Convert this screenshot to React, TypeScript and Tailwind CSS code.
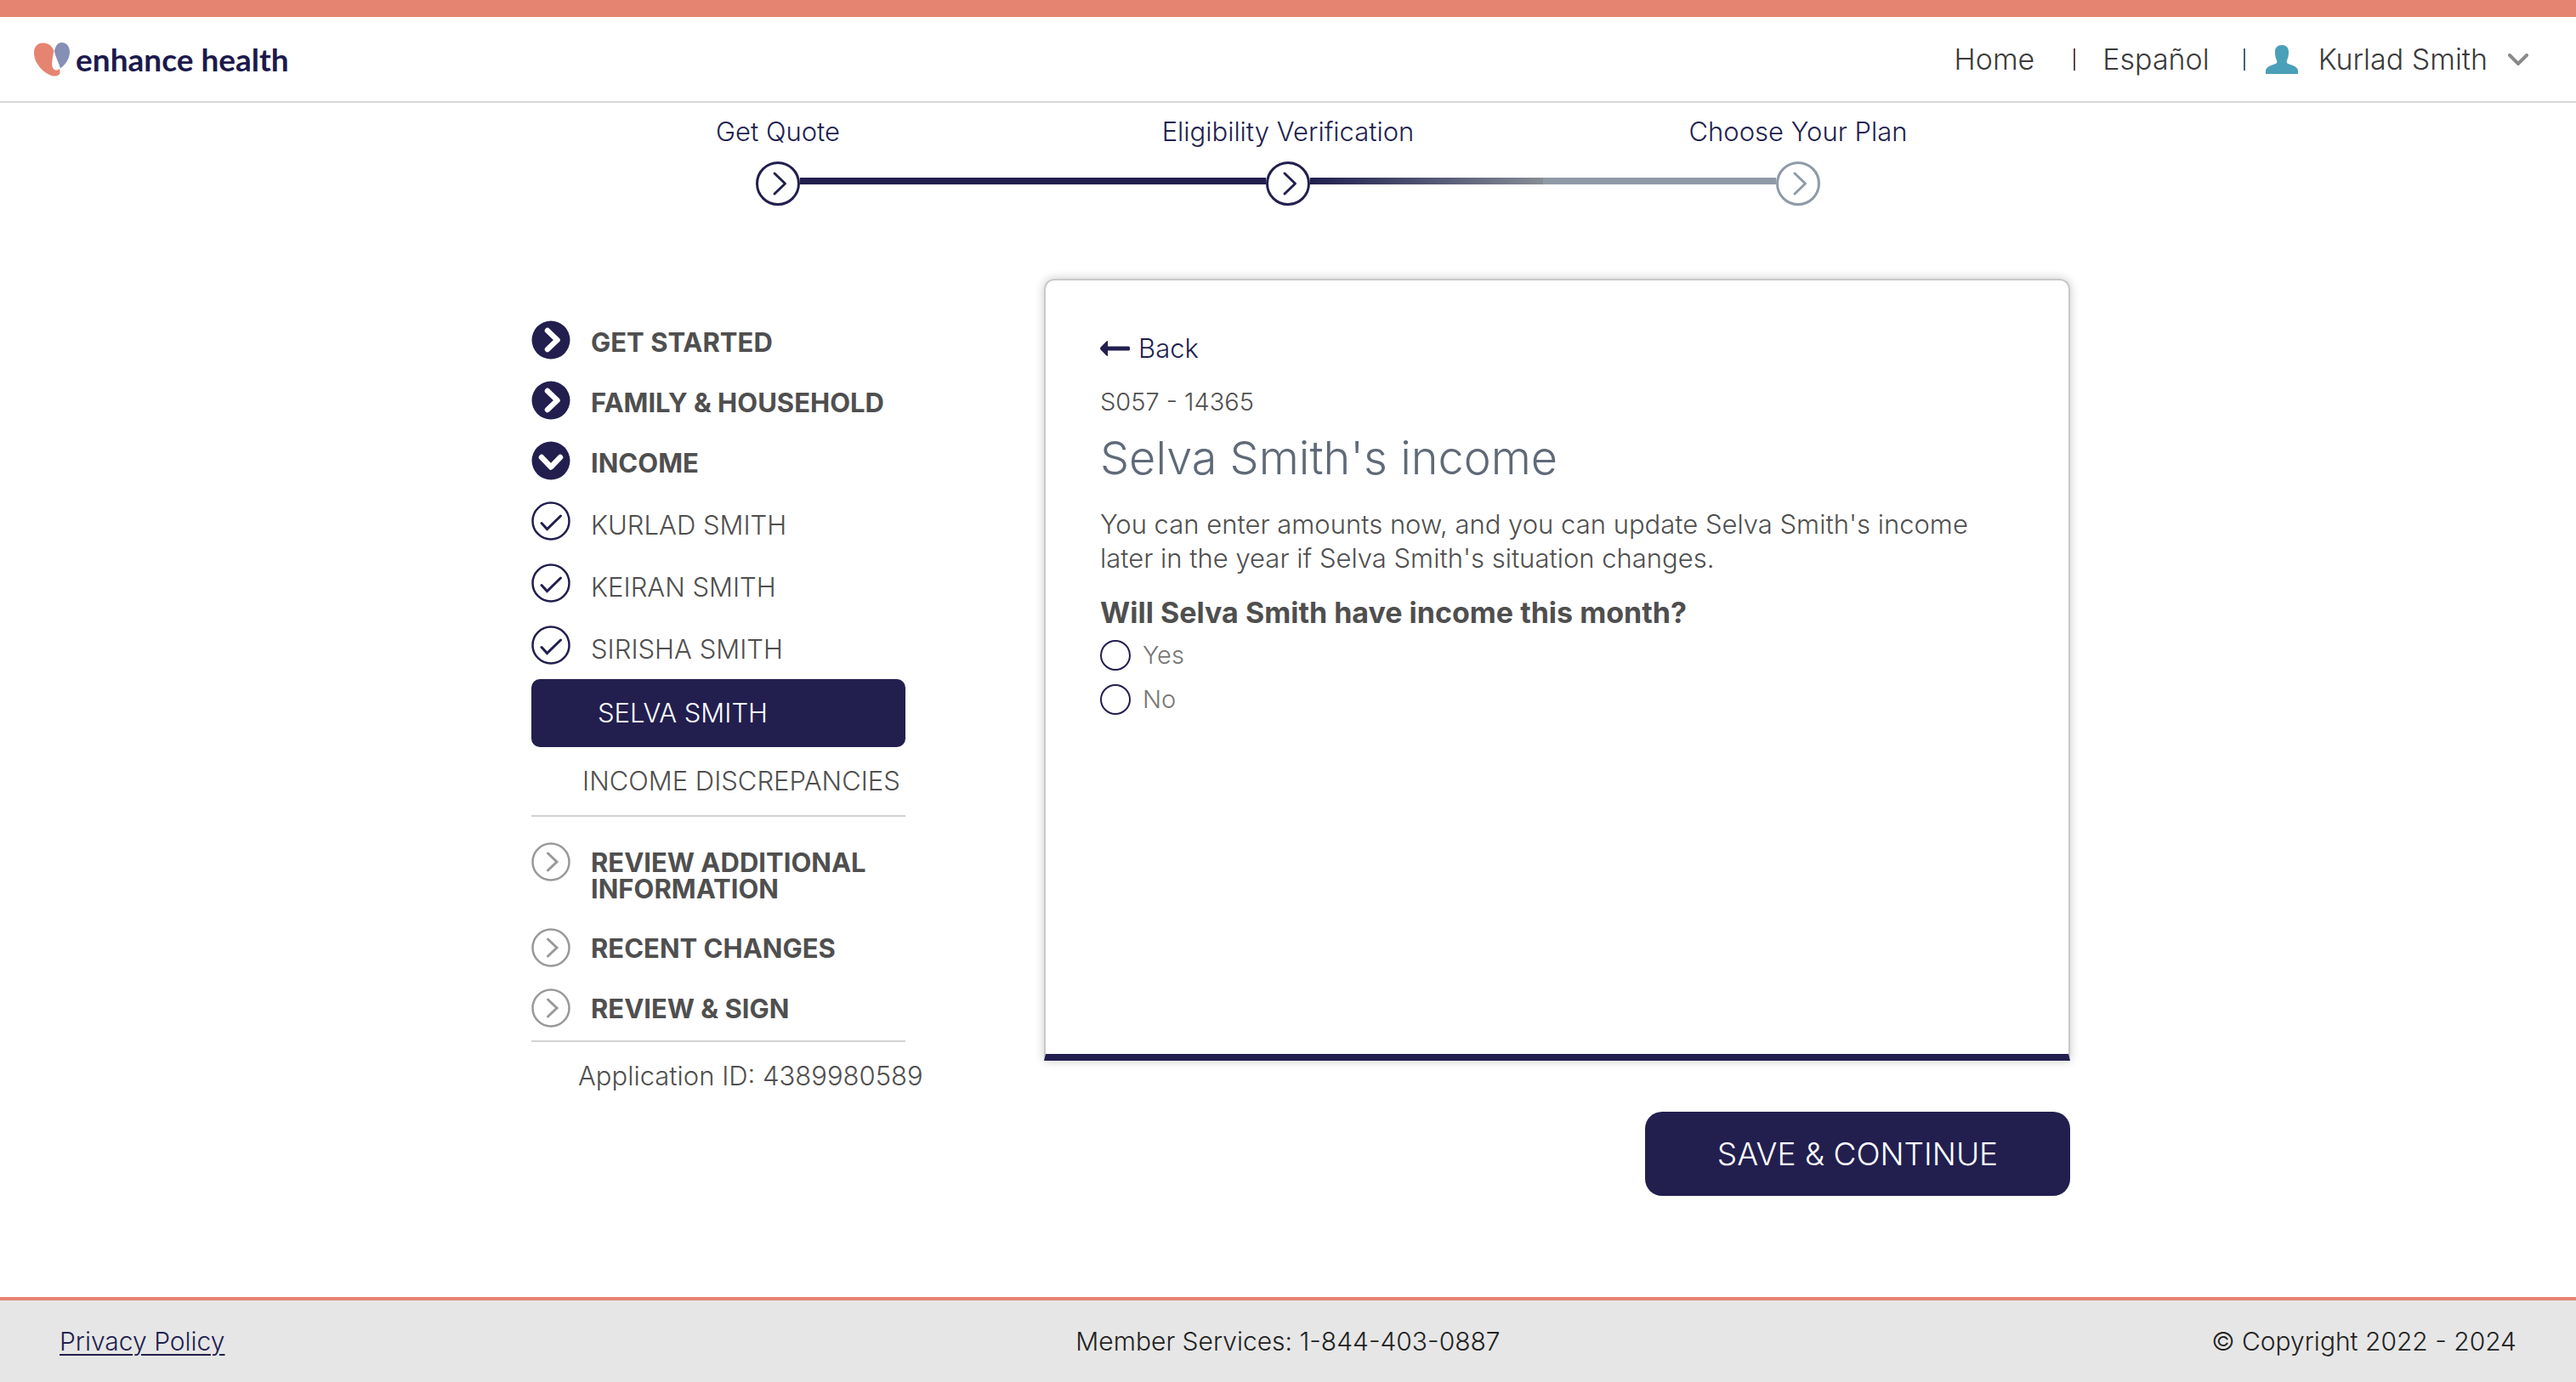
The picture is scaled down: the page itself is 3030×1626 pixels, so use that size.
import { useState } from "react";

type StepState = "done" | "upcoming";

function Logo() {
  return (
    <a href="#home" className="flex items-center gap-[7px] text-[#1c1a4c]">
      <svg viewBox="0 0 42 40" className="h-10 w-[42px]" aria-hidden="true">
        <path
          d="M23.500 10C21 4 17 .5 11 .5 4 .5 0 5 0 12c0 13 12 25 23 27.500 4 .5 7-1 7.500-4 .3-2 0-3.500-.5-5-.7 1.500-2 2.200-4 2-3.500-.3-5.200-4-4.800-9 .3-5 1.300-9 2.300-13.500z"
          fill="#e58471"
        />
        <path
          d="M24 10C25.500 3.500 28 0 32.500 0 38 0 42 4.500 42 11c0 8-5 15-11 19.500C29 23 25 17 24 10z"
          fill="#868fb5"
        />
      </svg>
      <span className="font-[Lato] text-[37px] leading-10 font-bold">enhance health</span>
    </a>
  );
}

function Header() {
  return (
    <header className="border-t-[20px] border-b-2 border-t-[#e58471] border-b-[#d8d8d8]">
      <div className="flex h-[99px] items-center justify-between pr-14 pl-10">
        <Logo />
        <nav className="flex items-center text-[34px] leading-10 text-[#3b3b3b]">
          <a href="#home">Home</a>
          <span className="ml-[46px] h-[26px] w-0.5 bg-[#5a4a48]" />
          <a href="#es" className="ml-8">Español</a>
          <span className="ml-10 h-[26px] w-0.5 bg-[#46627c]" />
          <button type="button" className="ml-6 flex items-center">
            <svg viewBox="0 0 38 34" className="h-[34px] w-[38px]" aria-hidden="true">
              <path
                d="M19 0c5 0 8 3 8 8 0 3-.3 5-.8 7-.6 2-1.500 3-1.500 4.500 0 2 1.300 2.500 4.300 3.500C35 25 38 27 38 31v3H0v-3c0-4 3-6 9-8 3-1 4.300-1.500 4.300-3.500 0-1.500-.9-2.500-1.500-4.500-.5-2-.8-4-.8-7 0-5 3-8 8-8z"
                fill="#4a9fb9"
              />
            </svg>
            <span className="ml-6">Kurlad Smith</span>
            <svg viewBox="0 0 24 14" className="ml-6 h-3.5 w-6" aria-hidden="true">
              <path d="M2 2l10 10L22 2" fill="none" stroke="#8a8a8a" strokeWidth="4" strokeLinecap="round" />
            </svg>
          </button>
        </nav>
      </div>
    </header>
  );
}

function StepCircle({ state }: { state: StepState }) {
  return (
    <svg
      viewBox="0 0 52 52"
      className={state === "done" ? "size-[52px] text-[#221f4f]" : "size-[52px] text-[#8f9aa7]"}
      fill="none"
      stroke="currentColor"
      strokeWidth="3"
      aria-hidden="true"
    >
      <circle cx="26" cy="26" r="24.500" />
      <path d="M22 14l12.500 12L22 38" strokeLinecap="round" strokeLinejoin="round" />
    </svg>
  );
}

const steps: { label: string; state: StepState; before: string; after: string }[] = [
  { label: "Get Quote", state: "done", before: "bg-transparent", after: "bg-[#221f4f]" },
  {
    label: "Eligibility Verification",
    state: "done",
    before: "bg-[#221f4f]",
    after: "bg-linear-to-r from-[#221f4f] to-[#868d94]",
  },
  { label: "Choose Your Plan", state: "upcoming", before: "bg-[#8f9aa7]", after: "bg-transparent" },
];

function Stepper() {
  return (
    <ol className="mx-auto flex w-full max-w-[1800px] pt-3.5">
      {steps.map((s) => (
        <li key={s.label} className="flex flex-1 flex-col items-center gap-[15px]">
          <span className="text-[31px] leading-10 text-[#221f4f]">{s.label}</span>
          <span className="flex w-full items-center">
            <span className={`mb-1.5 h-2 flex-1 ${s.before}`} />
            <StepCircle state={s.state} />
            <span className={`mb-1.5 h-2 flex-1 ${s.after}`} />
          </span>
        </li>
      ))}
    </ol>
  );
}

type IconKind = "right" | "down" | "check" | "pending";

function StatusIcon({ kind }: { kind: IconKind }) {
  if (kind === "right" || kind === "down") {
    return (
      <svg viewBox="0 0 46 46" className="size-[46px] shrink-0" fill="none" aria-hidden="true">
        <circle cx="23" cy="23" r="22.500" fill="#221f4f" />
        <path
          d={kind === "right" ? "M19 12l11.500 11L19 34" : "M12 19l11 11.500L34 19"}
          stroke="#fff"
          strokeWidth="6.500"
          strokeLinecap="round"
          strokeLinejoin="round"
        />
      </svg>
    );
  }
  return (
    <svg
      viewBox="0 0 46 46"
      className={kind === "check" ? "size-[46px] shrink-0 text-[#221f4f]" : "size-[46px] shrink-0 text-[#999]"}
      fill="none"
      stroke="currentColor"
      strokeWidth="2.500"
      aria-hidden="true"
    >
      <circle cx="23" cy="23" r="21.500" />
      {kind === "check" ? (
        <path d="M12 25.500l6.500 7L34.500 17" strokeWidth="3" strokeLinecap="round" />
      ) : (
        <path d="M19.500 13l10.500 10-10.500 10" strokeWidth="3" strokeLinecap="round" />
      )}
    </svg>
  );
}

const sections: { label: string; icon: IconKind }[] = [
  { label: "GET STARTED", icon: "right" },
  { label: "FAMILY & HOUSEHOLD", icon: "right" },
  { label: "INCOME", icon: "down" },
];
const members = ["KURLAD SMITH", "KEIRAN SMITH", "SIRISHA SMITH"];
const remaining = ["REVIEW ADDITIONAL INFORMATION", "RECENT CHANGES", "REVIEW & SIGN"];

function Sidebar() {
  return (
    <nav aria-label="Application sections" className="w-[440px] shrink-0 pt-[49px] text-[31px] text-[#4f4f4f]">
      <ul>
        {sections.map((s) => (
          <li key={s.label} className="h-[71px]">
            <a href="#section" className="flex items-start gap-6">
              <StatusIcon kind={s.icon} />
              <span className="pt-2.5 leading-[31px] font-bold whitespace-nowrap">{s.label}</span>
            </a>
          </li>
        ))}
      </ul>
      <ul className="flex flex-col gap-[27px]">
        {members.map((m) => (
          <li key={m}>
            <a href="#member" className="flex h-[46px] items-start gap-6">
              <StatusIcon kind="check" />
              <span className="pt-3 leading-[31px]">{m}</span>
            </a>
          </li>
        ))}
      </ul>
      <a
        href="#selva"
        aria-current="page"
        className="mt-[17px] flex h-20 items-center rounded-[10px] bg-[#221f4f] pl-[78px] text-white"
      >
        SELVA SMITH
      </a>
      <a
        href="#discrepancies"
        className="flex h-[82px] items-center border-b-2 border-[#d2d2d2] pl-[60px] whitespace-nowrap"
      >
        INCOME DISCREPANCIES
      </a>
      <ul className="flex flex-col gap-[25px] border-b-2 border-[#d2d2d2] pt-[30px] pb-[15px]">
        {remaining.map((r) => (
          <li key={r}>
            <a href="#section" className="flex items-start gap-6">
              <StatusIcon kind="pending" />
              <span className="pt-2 pb-1.5 leading-[31px] font-bold">{r}</span>
            </a>
          </li>
        ))}
      </ul>
      <p className="pt-5 pl-[55px] leading-10 whitespace-nowrap">Application ID: 4389980589</p>
    </nav>
  );
}

function IncomeForm() {
  const [answer, setAnswer] = useState("");
  return (
    <form className="min-w-0 flex-1" onSubmit={(e) => e.preventDefault()}>
      <div className="min-h-[920px] rounded-t-xl border-2 border-b-8 border-[#c9c9c9] border-b-[#221f4f] px-16 pt-[60px] text-[31px] leading-10 text-[#4f4f4f] shadow-[0_0_12px_rgba(0,0,0,0.22)]">
        <a href="#back" className="flex w-fit items-center gap-2.5 text-[#221f4f]">
          <svg viewBox="0 0 35 18" className="h-[18px] w-[35px]" fill="currentColor" aria-hidden="true">
            <path d="M9 0v6.500h24.500q1.500 0 1.500 1.500v2q0 1.500-1.500 1.500H9V18q-1 0-2-1L.6 10.400Q0 9.500 0 9t.6-1.400L7 1Q8 0 9 0z" />
          </svg>
          Back
        </a>
        <p className="mt-[23px] text-[29px] leading-10">S057 - 14365</p>
        <h1 className="mt-4 text-[54px] leading-[60px] text-[#5f6a78]">Selva Smith's income</h1>
        <p className="mt-7">
          You can enter amounts now, and you can update Selva Smith's income later in the year if Selva Smith's
          situation changes.
        </p>
        <fieldset className="mt-6">
          <legend className="text-[34px] leading-10 font-bold">Will Selva Smith have income this month?</legend>
          <div className="mt-3 flex flex-col gap-4 text-[29px] text-[#777]">
            {["Yes", "No"].map((o) => (
              <label key={o} className="flex h-9 w-fit items-center gap-3.5">
                <input
                  type="radio"
                  name="income"
                  value={o}
                  checked={answer === o}
                  onChange={() => setAnswer(o)}
                  className="size-9 appearance-none rounded-full border-2 border-[#221f4f] checked:border-[10px]"
                />
                {o}
              </label>
            ))}
          </div>
        </fieldset>
      </div>
      <button
        type="submit"
        className="mt-[60px] ml-auto block h-[99px] w-[500px] rounded-[20px] bg-[#221f4f] text-[37px] text-white"
      >
        SAVE &amp; CONTINUE
      </button>
    </form>
  );
}

export default function App() {
  return (
    <div className="flex min-h-screen flex-col bg-white font-['Inter',sans-serif] font-light">
      <Header />
      <Stepper />
      <main className="mx-auto mt-[86px] flex w-full max-w-[1840px] items-start gap-[163px] pl-[30px] pb-16">
        <Sidebar />
        <IncomeForm />
      </main>
      <footer className="mt-auto grid h-[100px] grid-cols-3 items-center border-t-4 border-[#e58471] bg-[#e6e6e6] px-[70px] text-[30px] text-[#222]">
        <a href="#privacy" className="justify-self-start text-[#221f4f] underline decoration-2 underline-offset-4">
          Privacy Policy
        </a>
        <span className="justify-self-center">Member Services: 1-844-403-0887</span>
        <span className="justify-self-end">© Copyright 2022 - 2024</span>
      </footer>
    </div>
  );
}
